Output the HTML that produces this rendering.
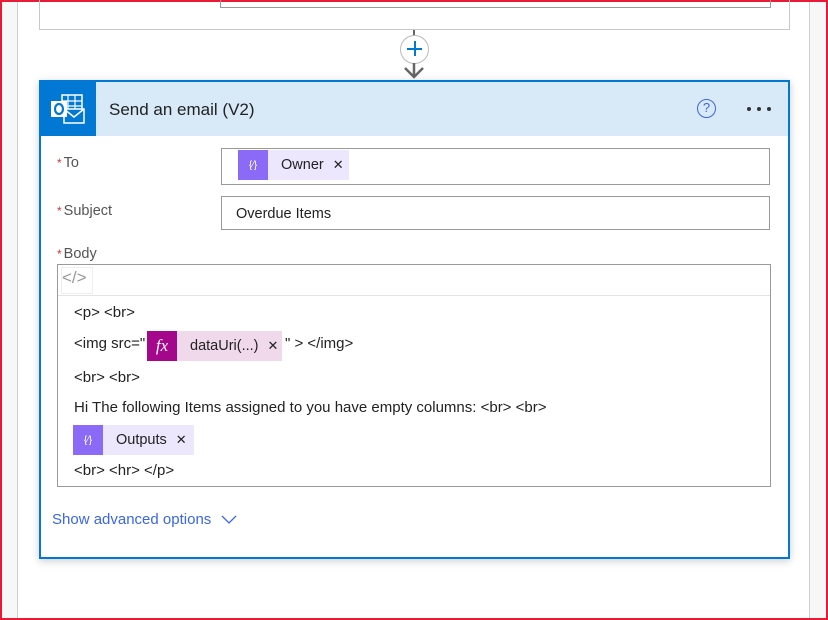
<!DOCTYPE html>
<html><head><style>
*{box-sizing:border-box;margin:0;padding:0}
body{width:828px;height:620px;position:relative;background:#fff;font-family:"Segoe UI","Liberation Sans",sans-serif;overflow:hidden;color:#222}
.a{position:absolute}
.lbl{font-size:14.5px;color:#555}
.lbl b{color:#d13438;font-weight:normal;font-size:12px;margin-right:2px}
.inp{border:1px solid #9a9a9a;background:#fff}
.t{font-size:14px;color:#222;white-space:nowrap}
.tok{position:absolute;height:30px;display:flex;align-items:center;font-size:14.5px}
.ic{width:30px;height:30px;display:flex;align-items:center;justify-content:center;color:#fff}
</style></head><body>
<div class="a" style="left:0;top:0;width:828px;height:620px;border:2px solid #e81a35"></div>
<div class="a" style="left:2px;top:2px;width:16px;height:616px;background:#f7f7f7;border-right:1px solid #d0d0d0"></div>
<div class="a" style="left:809px;top:2px;width:17px;height:616px;background:#f7f7f7;border-left:1px solid #d0d0d0"></div>
<div class="a" style="left:39px;top:0;width:751px;height:30px;border:1px solid #c8c8c8;border-top:none"></div>
<div class="a" style="left:220px;top:0;width:551px;height:8px;border:1px solid #9a9a9a;border-top:none"></div>
<div class="a" style="left:413px;top:30px;width:2px;height:8px;background:#666"></div>
<div class="a" style="left:400px;top:35px;width:29px;height:29px;border-radius:50%;border:1px solid #bbb;background:#fff"></div>
<div class="a" style="left:407px;top:48px;width:15px;height:1.5px;background:#0078d4"></div>
<div class="a" style="left:414px;top:41px;width:1.5px;height:15px;background:#0078d4"></div>
<svg class="a" style="left:402px;top:63px" width="26" height="16"><path d="M12 0V14M3 5L12 14L21 5" stroke="#666" stroke-width="2.5" fill="none"/></svg>
<div class="a" style="left:39px;top:80px;width:751px;height:479px;border:2px solid #0078d4;box-shadow:0 2px 8px rgba(0,0,0,.2);background:#fff"></div>
<div class="a" style="left:41px;top:82px;width:747px;height:54px;background:#d8e9f7"></div>
<div class="a" style="left:41px;top:82px;width:55px;height:54px;background:#0078d4"></div>
<svg class="a" style="left:50px;top:93px" width="36" height="32"><rect x="12" y="2" width="20" height="16" fill="none" stroke="#fff" stroke-width="1.5"/><path d="M18 2V18M25 2V18M12 8H32M12 13H32" stroke="#fff" stroke-width="1.2"/><rect x="14" y="16" width="20" height="14" fill="#0078d4" stroke="#fff" stroke-width="1.5"/><path d="M14 16L24 24L34 16" stroke="#fff" stroke-width="1.5" fill="none"/><rect x="1" y="8" width="16" height="16" fill="#fff"/><ellipse cx="9" cy="16" rx="4" ry="5" fill="none" stroke="#0078d4" stroke-width="2.2"/></svg>
<div class="a t" style="left:109px;top:100px;font-size:17px;color:#222">Send an email (V2)</div>
<div class="a" style="left:697px;top:99px;width:19px;height:19px;border:1.5px solid #3a66e8;border-radius:50%;color:#3a66e8;font-size:13px;text-align:center;line-height:16px">?</div>
<div class="a" style="left:747px;top:107px;width:4px;height:4px;border-radius:50%;background:#333"></div>
<div class="a" style="left:757px;top:107px;width:4px;height:4px;border-radius:50%;background:#333"></div>
<div class="a" style="left:767px;top:107px;width:4px;height:4px;border-radius:50%;background:#333"></div>
<div class="a lbl" style="left:57px;top:155px"><b>*</b>To</div>
<div class="a inp" style="left:221px;top:148px;width:549px;height:37px"></div>
<div class="tok" style="left:238px;top:150px;background:#ede7fd;width:111px"><div class="ic" style="background:#8a6af7;font-size:10px">{⁄}</div><span style="margin-left:13px">Owner</span><span style="margin-left:9px;font-size:13px">✕</span></div>
<div class="a lbl" style="left:57px;top:203px"><b>*</b>Subject</div>
<div class="a inp" style="left:221px;top:196px;width:549px;height:34px"></div>
<div class="a t" style="left:236px;top:206px;font-size:14.5px">Overdue Items</div>
<div class="a lbl" style="left:57px;top:246px"><b>*</b>Body</div>
<div class="a inp" style="left:57px;top:264px;width:714px;height:223px"></div>
<div class="a" style="left:58px;top:295px;width:712px;height:1px;background:#e4e4e4"></div>
<div class="a" style="left:61px;top:267px;width:32px;height:27px;color:#999;font-size:17px;border:1px solid #eee">&lt;/&gt;</div>
<div class="a t" style="left:74px;top:304px;font-size:15px">&lt;p&gt; &lt;br&gt;</div>
<div class="a t" style="left:74px;top:335px;font-size:15px">&lt;img src="</div>
<div class="tok" style="left:147px;top:331px;background:#f1d9ec;width:135px"><div class="ic" style="background:#a4078b;font-family:'Liberation Serif',serif;font-style:italic;font-size:17px">fx</div><span style="margin-left:13px">dataUri(...)</span><span style="margin-left:9px;font-size:13px">✕</span></div>
<div class="a t" style="left:285px;top:335px;font-size:15px">" &gt; &lt;/img&gt;</div>
<div class="a t" style="left:74px;top:369px;font-size:15px">&lt;br&gt; &lt;br&gt;</div>
<div class="a t" style="left:74px;top:399px;font-size:15px">Hi The following Items assigned to you have empty columns: &lt;br&gt; &lt;br&gt;</div>
<div class="tok" style="left:73px;top:425px;background:#ede7fd;width:121px"><div class="ic" style="background:#8a6af7;font-size:10px">{⁄}</div><span style="margin-left:13px">Outputs</span><span style="margin-left:9px;font-size:13px">✕</span></div>
<div class="a t" style="left:74px;top:462px;font-size:15px">&lt;br&gt; &lt;hr&gt; &lt;/p&gt;</div>
<div class="a t" style="left:52px;top:511px;color:#3a66e8;font-size:15px">Show advanced options</div>
<svg class="a" style="left:221px;top:515px" width="16" height="10"><path d="M1 1L8 8L15 1" stroke="#3a66e8" stroke-width="1.3" fill="none"/></svg>
</body></html>
